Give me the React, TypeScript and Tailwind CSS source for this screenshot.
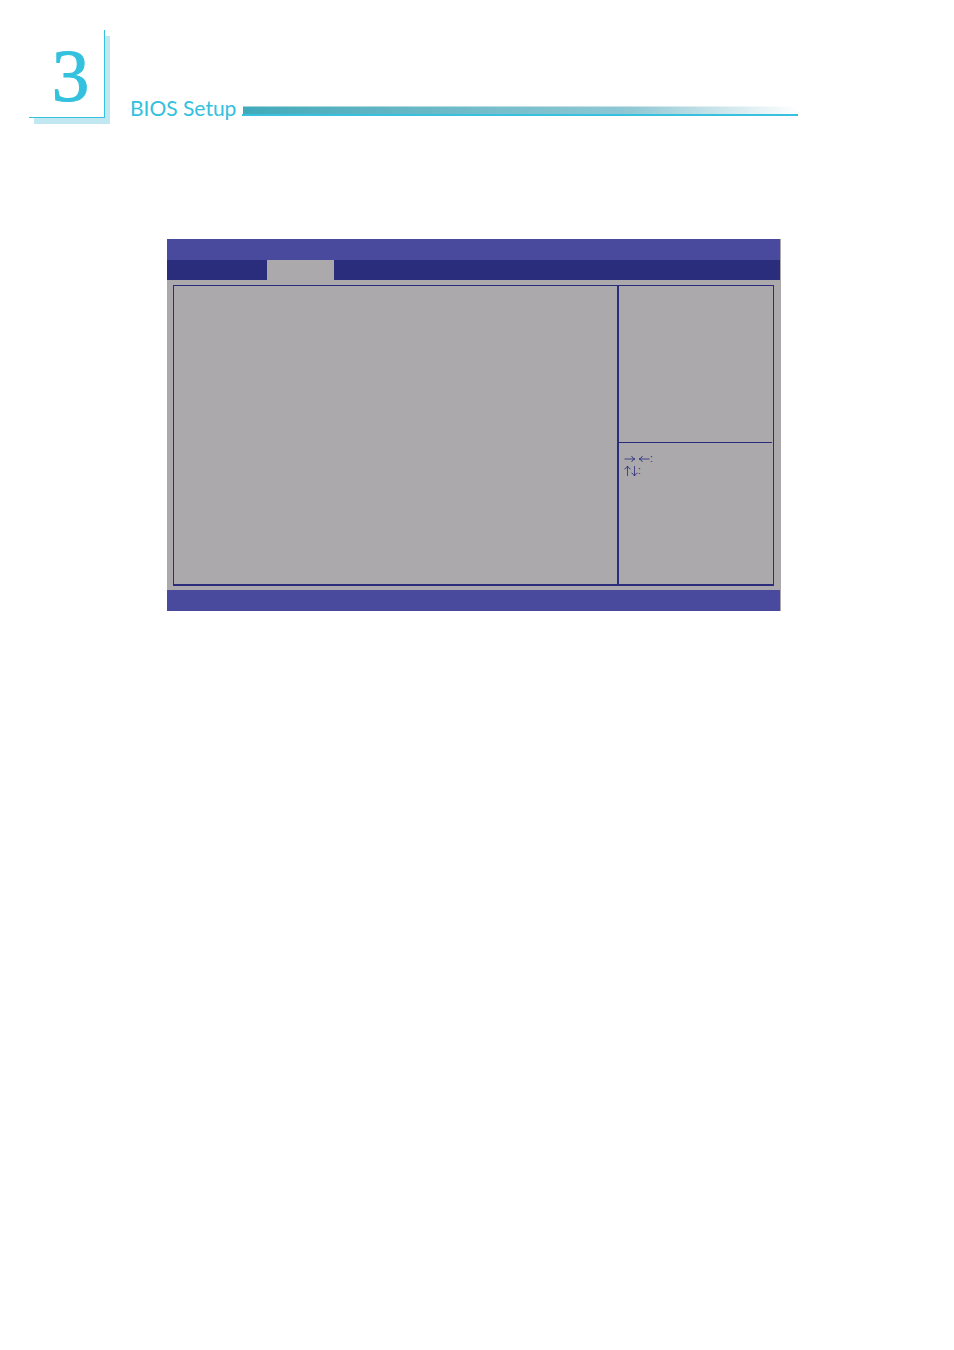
// thin arrow pairs used in the key legend
function HorizontalArrows() {
  return (
    <svg
      role="img"
      aria-label="→ ←"
      className="h-3 w-[26px] shrink-0"
      viewBox="0 0 26 12"
      fill="none"
      stroke="currentColor"
      strokeWidth="0.8"
    >
      <path d="M0.5 6H11M7.5 3Q8.5 5.5 11 6Q8.5 6.5 7.5 9" />
      <path d="M25.5 6H15M18.5 3Q17.5 5.5 15 6Q17.5 6.5 18.5 9" />
    </svg>
  );
}

function VerticalArrows() {
  return (
    <svg
      role="img"
      aria-label="↑↓"
      className="h-3 w-[14px] shrink-0"
      viewBox="0 0 14 12"
      fill="none"
      stroke="currentColor"
      strokeWidth="0.8"
    >
      <path d="M3.5 11V1M0.5 4Q3 3 3.5 1Q4 3 6.5 4" />
      <path d="M10.5 1V11M7.5 8Q10 9 10.5 11Q11 9 13.5 8" />
    </svg>
  );
}

const keyHelp = [
  { id: "horizontal", Icon: HorizontalArrows },
  { id: "vertical", Icon: VerticalArrows },
];

function ChapterHeader() {
  return (
    <header className="flex items-start pl-[29px] pr-[156px] pt-[30px]">
      {/* Chapter number */}
      <div className="flex h-[88px] w-[76px] shrink-0 items-center justify-center border-r border-b border-[#33c1de] bg-white pl-2 pt-1 font-['Liberation_Serif',serif] text-[75px] leading-none text-[#33c1de] shadow-[5px_6px_0_0_#c1e7f0] [-webkit-text-stroke:1px_#33c1de]">
        3
      </div>

      {/* Chapter title + rule */}
      <div className="flex h-[86px] flex-1 items-end pl-[25px]">
        <h1 className="w-[112px] shrink-0 whitespace-nowrap font-['Lato',sans-serif] text-[21px] leading-4 text-[#33c1de]">
          BIOS Setup
        </h1>
        <div className="flex-1 border-b-2 border-[#38c1de]">
          <div className="ml-px h-2 border-t border-white/50 bg-linear-to-r from-[#40aaba] via-[#90c8d4] via-70% to-white" />
        </div>
      </div>
    </header>
  );
}

function BiosScreen() {
  return (
    <section className="mt-[121px] mr-[173px] ml-[167px] border-r border-[#aba9ac] bg-[#aba9ac]">
      <div className="h-[21px] bg-[#49499d]" />

      {/* Tab row */}
      <div className="flex h-5">
        <div className="w-[100px] bg-[#2a2c7c]" />
        <div className="w-[67px]" />
        <div className="flex-1 bg-[#2a2c7c]" />
      </div>

      <div className="pt-[5px] pr-[6px] pb-1 pl-[6px]">
        <div className="flex h-[301px] border border-b-2 border-[#2a2c7c]">
          <div className="flex-1" />
          <aside className="flex w-[156px] flex-col border-l-2 border-[#2a2c7c]">
            <div className="mr-px h-[157px] border-b border-[#2a2c7c]" />
            <ul className="pt-[10px] pl-[5px] font-['Liberation_Sans',sans-serif] text-[10px] leading-3 text-[#2a2c7c]">
              {keyHelp.map(({ id, Icon }) => (
                <li key={id} className="flex h-3 items-center">
                  <Icon />
                  <span>:</span>
                </li>
              ))}
            </ul>
          </aside>
        </div>
      </div>

      <div className="h-[21px] bg-[#49499d]" />
    </section>
  );
}

export default function App() {
  return (
    <main className="min-h-screen bg-white">
      <ChapterHeader />
      <BiosScreen />
    </main>
  );
}
